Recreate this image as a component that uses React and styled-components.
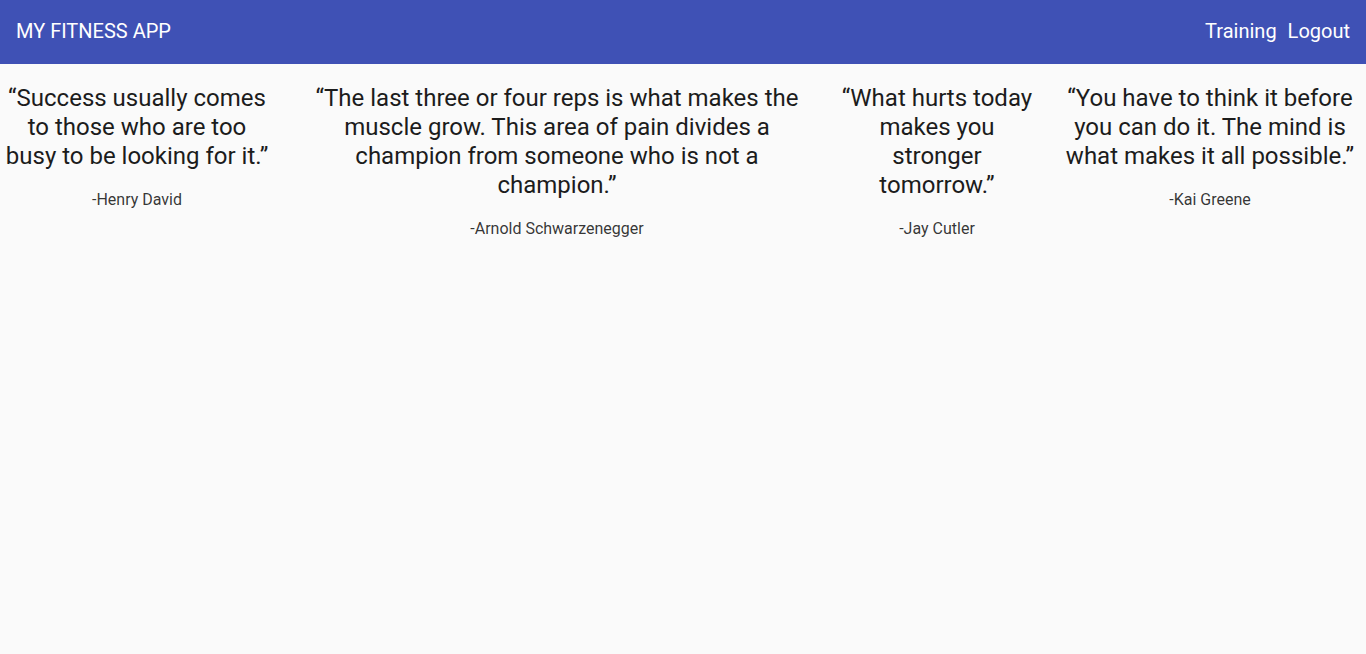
import React from "react";
import styled, { createGlobalStyle } from "styled-components";

const GlobalStyle = createGlobalStyle`
  html, body {
    margin: 0;
    padding: 0;
    background: #fafafa;
    font-family: Roboto, "Helvetica Neue", sans-serif;
  }
`;

const quotes = [
  {
    text: "“Success usually comes to those who are too busy to be looking for it.”",
    author: "-Henry David",
    width: 274,
  },
  {
    text: "“The last three or four reps is what makes the muscle grow. This area of pain divides a champion from someone who is not a champion.”",
    author: "-Arnold Schwarzenegger",
    width: 526,
  },
  {
    text: "“What hurts today makes you stronger tomorrow.”",
    author: "-Jay Cutler",
    width: 194,
  },
  {
    text: "“You have to think it before you can do it. The mind is what makes it all possible.”",
    author: "-Kai Greene",
    width: 312,
  },
];

const App = () => {
  return (
    <>
      <GlobalStyle />
      <Toolbar>
        <Brand>MY FITNESS APP</Brand>
        <Nav>
          <NavLink href="#">Training</NavLink>
          <NavLink href="#">Logout</NavLink>
        </Nav>
      </Toolbar>
      <Quotes>
        {quotes.map((q) => (
          <Quote key={q.author} $width={q.width}>
            <QuoteText>{q.text}</QuoteText>
            <Author>{q.author}</Author>
          </Quote>
        ))}
      </Quotes>
    </>
  );
};

const Toolbar = styled.header`
  height: 64px;
  background: #3f51b5;
  color: #fff;
  display: flex;
  align-items: center;
  justify-content: space-between;
  padding: 0 16px 2px;
  box-sizing: border-box;
`;

const Brand = styled.span`
  font-size: 20px;
  font-weight: 400;
`;

const Nav = styled.nav`
  display: flex;
  gap: 11px;
`;

const NavLink = styled.a`
  color: #fff;
  text-decoration: none;
  font-size: 20px;
`;

const Quotes = styled.main`
  display: flex;
  gap: 20px;
  align-items: flex-start;
  padding-top: 20px;
`;

const Quote = styled.section`
  flex: 0 0 ${(p) => p.$width}px;
  text-align: center;
  display: flex;
  flex-direction: column;
  gap: 19px;
`;

const QuoteText = styled.h3`
  margin: 0;
  font-size: 24px;
  font-weight: 400;
  line-height: 29px;
  color: #1c1c1c;
`;

const Author = styled.p`
  margin: 0;
  font-size: 16px;
  line-height: 19px;
  color: rgba(0, 0, 0, 0.8);
`;

export default App;
